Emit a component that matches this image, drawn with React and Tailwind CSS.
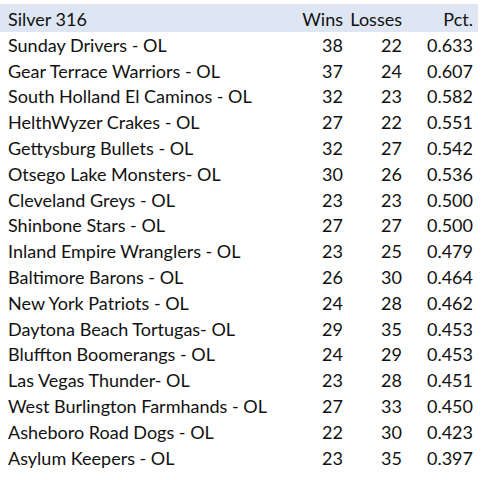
const teams = [
  ["Sunday Drivers - OL", 38, 22, "0.633"],
  ["Gear Terrace Warriors - OL", 37, 24, "0.607"],
  ["South Holland El Caminos - OL", 32, 23, "0.582"],
  ["HelthWyzer Crakes - OL", 27, 22, "0.551"],
  ["Gettysburg Bullets - OL", 32, 27, "0.542"],
  ["Otsego Lake Monsters- OL", 30, 26, "0.536"],
  ["Cleveland Greys - OL", 23, 23, "0.500"],
  ["Shinbone Stars - OL", 27, 27, "0.500"],
  ["Inland Empire Wranglers - OL", 23, 25, "0.479"],
  ["Baltimore Barons - OL", 26, 30, "0.464"],
  ["New York Patriots - OL", 24, 28, "0.462"],
  ["Daytona Beach Tortugas- OL", 29, 35, "0.453"],
  ["Bluffton Boomerangs - OL", 24, 29, "0.453"],
  ["Las Vegas Thunder- OL", 23, 28, "0.451"],
  ["West Burlington Farmhands - OL", 27, 33, "0.450"],
  ["Asheboro Road Dogs - OL", 22, 30, "0.423"],
  ["Asylum Keepers - OL", 23, 35, "0.397"],
];

function Row({ cells, header }) {
  return (
    <div
      className={
        "grid grid-cols-[290px_53px_59px_76px] items-end " +
        (header ? "h-[28px] pb-[4px] bg-[#dde6f2]" : "h-[25.8px] pb-[4px]")
      }
    >
      <div className="pl-[8px] whitespace-nowrap">{cells[0]}</div>
      <div className="text-right">{cells[1]}</div>
      <div className="text-right">{cells[2]}</div>
      <div className="text-right pr-[5px]">{cells[3]}</div>
    </div>
  );
}

export default function App() {
  return (
    <div className="w-[490px] h-[480px] bg-white pt-[4px] text-[18px] leading-[18px] text-[#111] font-['Lato',sans-serif]">
      <div className="w-[478px]">
        <Row header cells={["Silver 316", "Wins", "Losses", "Pct."]} />
        {teams.map((t) => (
          <Row key={t[0]} cells={t} />
        ))}
      </div>
    </div>
  );
}
